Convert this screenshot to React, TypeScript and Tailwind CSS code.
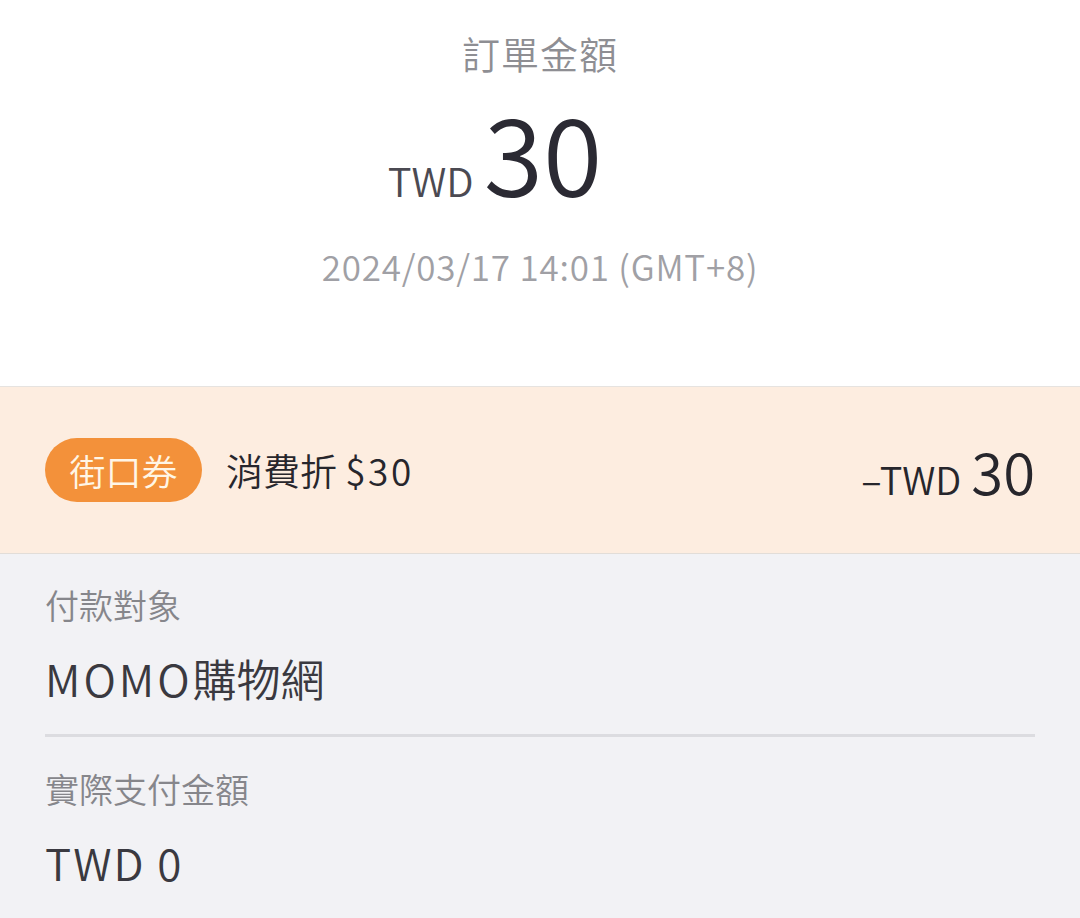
const font = {
  fontFamily: '"Noto Sans CJK TC", "Noto Sans", sans-serif',
};

const Label = ({ children }: { children: string }) => (
  <span className="block text-[34px] leading-[34px] text-[#86868b]">{children}</span>
);

const Value = ({ children }: { children: React.ReactNode }) => (
  <span className="block mt-[34px] text-[44px] leading-[44px] text-[#3a3940]">{children}</span>
);

export default function App() {
  return (
    <div className="w-[1080px] h-[918px] overflow-hidden bg-[#f2f2f5] font-[350]" style={font}>
      <div className="h-[387px] bg-white border-b border-[#e6e3e0] flex flex-col items-center pt-[34px]">
        <span className="text-[38px] leading-[38px] text-[#8e8e93] tracking-[1px]">訂單金額</span>
        <div className="mt-[24px] mr-[90px] flex items-baseline">
          <span className="text-[40px] leading-[40px] text-[#4b4a52] mr-[10px]">TWD</span>
          <span className="text-[108px] leading-[108px] text-[#2b2a33]">30</span>
        </div>
        <span className="mt-[44px] text-[35px] leading-[35px] tracking-[0.8px] text-[#a0a0a5]">
          2024/03/17 14:01 (GMT+8)
        </span>
      </div>
      <div className="h-[167px] bg-[#fdede0] border-b border-[#e2ddd8] flex items-center justify-between px-[45px]">
        <div className="flex items-center">
          <span className="h-[64px] w-[157px] rounded-full bg-[#f3913a] flex items-center justify-center text-[36px] leading-[36px] text-[#fff6e6]">
            街口券
          </span>
          <span className="ml-[24px] text-[37px] leading-[37px] text-[#27262c]">
            消費折 <span className="tracking-[2.5px]">$30</span>
          </span>
        </div>
        <div className="flex items-baseline text-[#27262c]">
          <span className="text-[38px] leading-[38px] mr-[10px]">–TWD</span>
          <span className="text-[58px] leading-[58px]">30</span>
        </div>
      </div>
      <div className="px-[45px] pt-[34px]">
        <Label>付款對象</Label>
        <Value>
          <span className="tracking-[3px]">MOMO</span>購物網
        </Value>
        <div className="mt-[34px] h-[3px] bg-[#dcdce0]" />
        <div className="mt-[35px]">
          <Label>實際支付金額</Label>
          <Value>
            <span className="tracking-[2px]">TWD 0</span>
          </Value>
        </div>
      </div>
    </div>
  );
}
